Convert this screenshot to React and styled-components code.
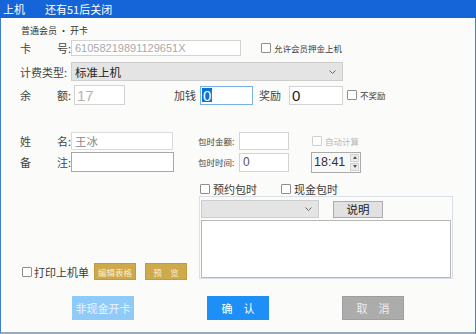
import React from "react";
import styled, { createGlobalStyle } from "styled-components";

const FONT = `"Noto Sans CJK SC", "Liberation Sans", sans-serif`;

const GlobalStyle = createGlobalStyle`
  html, body { margin: 0; padding: 0; background: #fbfbf9; }
  * { box-sizing: border-box; }
`;

const Window = styled.div`
  width: 476px;
  height: 334px;
  display: flex;
  flex-direction: column;
  font-family: ${FONT};
  color: #3c3c3c;
  overflow: hidden;
`;

const TitleBar = styled.div`
  height: 18px;
  flex-shrink: 0;
  display: flex;
  align-items: center;
  gap: 20px;
  padding-left: 3px;
  background: #1565d8;
  color: #fff;
  font-size: 11px;
`;

const Body = styled.div`
  flex: 1;
  display: flex;
  flex-direction: column;
  padding-left: 19px;
  background: #fbfbf9;
  border-left: 1px solid #3f80d4;
  border-right: 1px solid #3f80d4;
  border-bottom: 2px solid #9aa8bb;
`;

const Caption = styled.div`
  margin-top: 7px;
  padding-left: 1px;
  font-size: 9px;
  line-height: 12px;
  color: #333;
`;

const Row = styled.div`
  display: flex;
  align-items: center;
  height: ${(p) => p.$h}px;
  margin-top: ${(p) => p.$mt || 0}px;
`;

const Label = styled.div`
  width: ${(p) => p.$w}px;
  margin-left: ${(p) => p.$ml || 0}px;
  flex-shrink: 0;
  display: flex;
  justify-content: space-between;
  font-size: ${(p) => p.$fs || 11}px;
  color: #444;
  white-space: nowrap;
`;

const Field = styled.div`
  width: ${(p) => p.$w}px;
  height: ${(p) => p.$h}px;
  margin-left: ${(p) => p.$ml || 0}px;
  flex-shrink: 0;
  display: flex;
  align-items: center;
  padding-left: ${(p) => p.$pl ?? 3}px;
  background: #fff;
  border: 1px solid ${(p) => p.$border || "#d3d3d3"};
  color: ${(p) => p.$color || "#222"};
  font-size: ${(p) => p.$fs || 11}px;
  font-family: ${(p) => (p.$num ? `"Liberation Sans", sans-serif` : FONT)};
  white-space: nowrap;
  overflow: hidden;
`;

const Selected = styled.span`
  display: inline-flex;
  align-items: center;
  height: 14px;
  padding: 0 1px;
  background: #0a74d6;
  color: #fff;
`;

const Select = styled.div`
  width: ${(p) => p.$w}px;
  height: ${(p) => p.$h}px;
  flex-shrink: 0;
  display: flex;
  align-items: center;
  justify-content: space-between;
  padding: 0 6px 0 3px;
  background: #e4e4e4;
  border: 1px solid #cdcdcd;
  font-size: 11.5px;
  color: #222;
`;

const Chevron = () => (
  <svg width="7" height="4" viewBox="0 0 7 4">
    <polyline points="0.5,0.5 3.5,3.5 6.5,0.5" fill="none" stroke="#666" strokeWidth="1" />
  </svg>
);

const CheckItem = styled.div`
  display: flex;
  align-items: center;
  margin-left: ${(p) => p.$ml || 0}px;
  font-size: ${(p) => p.$fs || 11}px;
  color: ${(p) => (p.$disabled ? "#b8b8b8" : "#3c3c3c")};
  white-space: nowrap;
`;

const Box = styled.span`
  width: 10px;
  height: 10px;
  margin-right: ${(p) => p.$gap ?? 3}px;
  background: #fff;
  border: 1px solid ${(p) => (p.$disabled ? "#cfcfcf" : "#8e8e8e")};
  border-radius: 1px;
  flex-shrink: 0;
`;

const Lower = styled.div`
  display: flex;
  margin-top: 26px;
`;

const LeftCol = styled.div`
  width: 178px;
  display: flex;
  flex-direction: column;
`;

const RightCol = styled.div`
  display: flex;
  flex-direction: column;
`;

const PrintRow = styled.div`
  margin-top: auto;
  margin-bottom: -1px;
  height: 17px;
  display: flex;
  align-items: center;
  padding-left: 2px;
`;

const GoldButton = styled.div`
  width: 42px;
  height: 17px;
  margin-left: ${(p) => p.$ml}px;
  display: flex;
  align-items: center;
  justify-content: center;
  background: #cfaa4a;
  border: 1px solid #c29c3c;
  color: #f6eed8;
  font-size: 8.5px;
`;

const TimeBox = styled.div`
  width: 50px;
  height: 21px;
  margin-left: 22px;
  display: flex;
  align-items: stretch;
  background: #f8f8f8;
  border: 1px solid #ababab;
`;

const TimeText = styled.div`
  flex: 1;
  display: flex;
  align-items: center;
  padding-left: 2px;
  font-size: 12.5px;
  font-family: "Liberation Sans", sans-serif;
  color: #333;
`;

const Spin = styled.div`
  width: 10px;
  display: flex;
  flex-direction: column;
  gap: 1px;
  padding: 1px 1px 1px 0;
`;

const SpinBtn = styled.div`
  flex: 1;
  display: flex;
  align-items: center;
  justify-content: center;
  background: #ececec;
  border: 1px solid #d2d2d2;
`;

const Tri = ({ up }) => (
  <svg width="4" height="3" viewBox="0 0 4 3">
    <polygon points={up ? "0,3 2,0 4,3" : "0,0 4,0 2,3"} fill="#555" />
  </svg>
);

const GroupBox = styled.div`
  width: 254px;
  height: 83px;
  margin: 1px 0 0 1px;
  padding: 3px 1px 0 1px;
  border: 1px solid #d9e0e8;
  display: flex;
  flex-direction: column;
`;

const GroupBar = styled.div`
  display: flex;
  align-items: center;
`;

const PlainButton = styled.div`
  width: 50px;
  height: 17px;
  margin-left: 14px;
  display: flex;
  align-items: center;
  justify-content: center;
  background: #e1e1e1;
  border: 1px solid #adadad;
  font-size: 11.5px;
  color: #222;
`;

const TextArea = styled.div`
  margin-top: 2px;
  height: 58px;
  background: #fff;
  border: 1px solid #b8b8b8;
`;

const Footer = styled.div`
  display: flex;
  gap: 73px;
  margin-top: 17px;
  padding-left: 52px;
`;

const palette = {
  light: { bg: "#8fcbf8", border: "#8fcbf8", color: "#eaf5ff" },
  blue: { bg: "#1e8ff6", border: "#1e8ff6", color: "#fff" },
  gray: { bg: "#acacac", border: "#9e9e9e", color: "#efefef" },
};

const ActionButton = styled.div`
  width: 62px;
  height: 24px;
  display: flex;
  align-items: center;
  justify-content: center;
  background: ${(p) => palette[p.$variant].bg};
  border: 1px solid ${(p) => palette[p.$variant].border};
  color: ${(p) => palette[p.$variant].color};
  font-size: 11px;
`;

export default function App() {
  return (
    <>
      <GlobalStyle />
      <Window>
        <TitleBar>
          <span>上机</span>
          <span>还有51后关闭</span>
        </TitleBar>
        <Body>
          <Caption>普通会员 · 开卡</Caption>

          <Row $h={16} $mt={3}>
            <Label $w={51}>
              <span>卡</span>
              <span>号:</span>
            </Label>
            <Field $w={170} $h={16} $color="#a9a9a9" $num>
              61058219891129651X
            </Field>
            <CheckItem $ml={20} $fs={8.5}>
              <Box />
              允许会员押金上机
            </CheckItem>
          </Row>

          <Row $h={19} $mt={6}>
            <Label $w={51}>计费类型:</Label>
            <Select $w={272} $h={19}>
              <span>标准上机</span>
              <Chevron />
            </Select>
          </Row>

          <Row $h={20} $mt={4}>
            <Label $w={51}>
              <span>余</span>
              <span>额:</span>
            </Label>
            <Field $w={51} $h={20} $ml={3} $fs={15} $color="#b3b3b3" $pl={2} $num>
              17
            </Field>
            <Label $w={26} $ml={49}>加钱</Label>
            <Field $w={53} $h={19} $border="#79b1e6" $fs={15} $pl={1} $num>
              <Selected>0</Selected>
            </Field>
            <Label $w={30} $ml={6}>奖励</Label>
            <Field $w={54} $h={19} $fs={15} $pl={2} $num>
              0
            </Field>
            <CheckItem $ml={4} $fs={8.5}>
              <Box />
              不奖励
            </CheckItem>
          </Row>

          <Lower>
            <LeftCol>
              <Row $h={19}>
                <Label $w={51}>
                  <span>姓</span>
                  <span>名:</span>
                </Label>
                <Field $w={102} $h={18} $border="#dadada" $color="#8a8a8a" $fs={11.5}>
                  王冰
                </Field>
              </Row>
              <Row $h={20} $mt={2}>
                <Label $w={51}>
                  <span>备</span>
                  <span>注:</span>
                </Label>
                <Field $w={103} $h={20} $border="#a8a8a8" />
              </Row>
              <PrintRow>
                <CheckItem>
                  <Box $gap={2} />
                  打印上机单
                </CheckItem>
                <GoldButton $ml={5}>编辑表格</GoldButton>
                <GoldButton $ml={9}>预　览</GoldButton>
              </PrintRow>
            </LeftCol>

            <RightCol>
              <Row $h={19}>
                <Label $w={41} $fs={8.5}>包时金额:</Label>
                <Field $w={50} $h={18} />
                <CheckItem $ml={23} $fs={8.5} $disabled>
                  <Box $disabled />
                  自动计算
                </CheckItem>
              </Row>
              <Row $h={20} $mt={2}>
                <Label $w={41} $fs={8.5}>包时时间:</Label>
                <Field $w={50} $h={19} $fs={12} $color="#555" $num>
                  0
                </Field>
                <TimeBox>
                  <TimeText>18:41</TimeText>
                  <Spin>
                    <SpinBtn>
                      <Tri up />
                    </SpinBtn>
                    <SpinBtn>
                      <Tri />
                    </SpinBtn>
                  </Spin>
                </TimeBox>
              </Row>
              <Row $h={13} $mt={10}>
                <CheckItem $ml={2}>
                  <Box />
                  预约包时
                </CheckItem>
                <CheckItem $ml={24}>
                  <Box />
                  现金包时
                </CheckItem>
              </Row>
              <GroupBox>
                <GroupBar>
                  <Select $w={118} $h={18}>
                    <span />
                    <Chevron />
                  </Select>
                  <PlainButton>说明</PlainButton>
                </GroupBar>
                <TextArea />
              </GroupBox>
            </RightCol>
          </Lower>

          <Footer>
            <ActionButton $variant="light">非现金开卡</ActionButton>
            <ActionButton $variant="blue">确　认</ActionButton>
            <ActionButton $variant="gray">取　消</ActionButton>
          </Footer>
        </Body>
      </Window>
    </>
  );
}
